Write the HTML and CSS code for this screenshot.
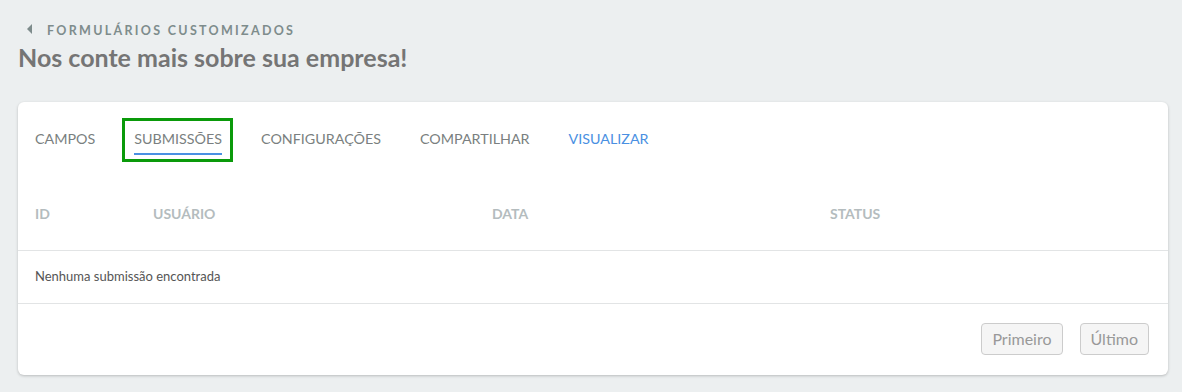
FILE: index.html
```html
<html>
	<head>
        <title>Nos conte mais sobre sua empresa!</title>
        <meta charset="utf-8">
        <link rel="stylesheet" href="styles.css">
	</head>
	<body>
        <div class="page">
            <div class="crumb">
                <span class="caret"></span>
                <span>Formulários customizados</span>
            </div>
            <h1>Nos conte mais sobre sua empresa!</h1>
            <div class="card">
                <div class="tabs">
                    <div class="tab">Campos</div>
                    <div class="tab active">Submissões</div>
                    <div class="tab">Configurações</div>
                    <div class="tab">Compartilhar</div>
                    <div class="tab link">Visualizar</div>
                </div>
                <table>
                    <thead>
                        <tr>
                            <th class="c-id">ID</th>
                            <th class="c-user">Usuário</th>
                            <th class="c-date">Data</th>
                            <th>Status</th>
                        </tr>
                    </thead>
                    <tbody>
                        <tr>
                            <td colspan="4">Nenhuma submissão encontrada</td>
                        </tr>
                    </tbody>
                </table>
                <div class="pager">
                    <button>Primeiro</button>
                    <button>Último</button>
                </div>
            </div>
        </div>
	</body>
</html>
```

FILE: styles.css
```css
        html, body {
            margin: 0;
            background: #ECEFF0;
            font-family: Lato, "Open Sans", sans-serif;
        }
        .page {
            padding: 20px 14px 0 18px;
        }
        .crumb {
            display: flex;
            align-items: center;
            height: 20px;
            padding-left: 9px;
            font-size: 12.5px;
            font-weight: 700;
            letter-spacing: 2.3px;
            text-transform: uppercase;
            color: #7E8C8C;
        }
        .caret {
            width: 0;
            height: 0;
            border-top: 5px solid transparent;
            border-bottom: 5px solid transparent;
            border-right: 5px solid #7E8C8C;
            margin-right: 15px;
            margin-top: -2px;
        }
        h1 {
            margin: 0;
            font-size: 25px;
            line-height: 35px;
            font-weight: 700;
            color: #757575;
        }
        .card {
            margin-top: 27px;
            background: #FFF;
            border-radius: 6px;
            box-shadow: 0 1px 3px rgba(0,0,0,0.22);
        }
        .tabs {
            display: flex;
            padding: 20px 0 0 17px;
            height: 53px;
            box-sizing: border-box;
        }
        .tab {
            font-size: 14.3px;
            line-height: 34px;
            height: 33px;
            color: #7A7F80;
            text-transform: uppercase;
            margin-right: 39px;
        }
        .tab.active {
            border-bottom: 2px solid #4A90E2;
            height: 31px;
            position: relative;
        }
        .tab.active:after {
            content: "";
            position: absolute;
            left: -12px;
            right: -11px;
            top: -4px;
            bottom: -9px;
            border: 3px solid #0A9A0A;
        }
        .tab.link {
            color: #4A90E2;
        }
        table {
            width: 100%;
            border-collapse: collapse;
            margin-top: 4px;
        }
        th {
            text-align: left;
            font-size: 14px;
            font-weight: 700;
            color: #B4BCBE;
            text-transform: uppercase;
            height: 91px;
            padding: 19px 0 0 17px;
            box-sizing: border-box;
            border-bottom: 1px solid #E2E4E5;
        }
        .c-id { width: 118px; }
        .c-user { width: 339px; }
        .c-date { width: 338px; }
        td {
            font-size: 13px;
            color: #555;
            height: 53px;
            padding: 0 0 1px 17px;
            box-sizing: border-box;
            border-bottom: 1px solid #E2E4E5;
        }
        .pager {
            display: flex;
            justify-content: flex-end;
            gap: 17px;
            padding: 19px 19px 20px 0;
        }
        button {
            font-family: Lato, "Open Sans", sans-serif;
            font-size: 16px;
            color: #999;
            background: #F5F5F5;
            border: 1px solid #CCC;
            border-radius: 4px;
            height: 32px;
            padding: 0 10px;
        }
```
